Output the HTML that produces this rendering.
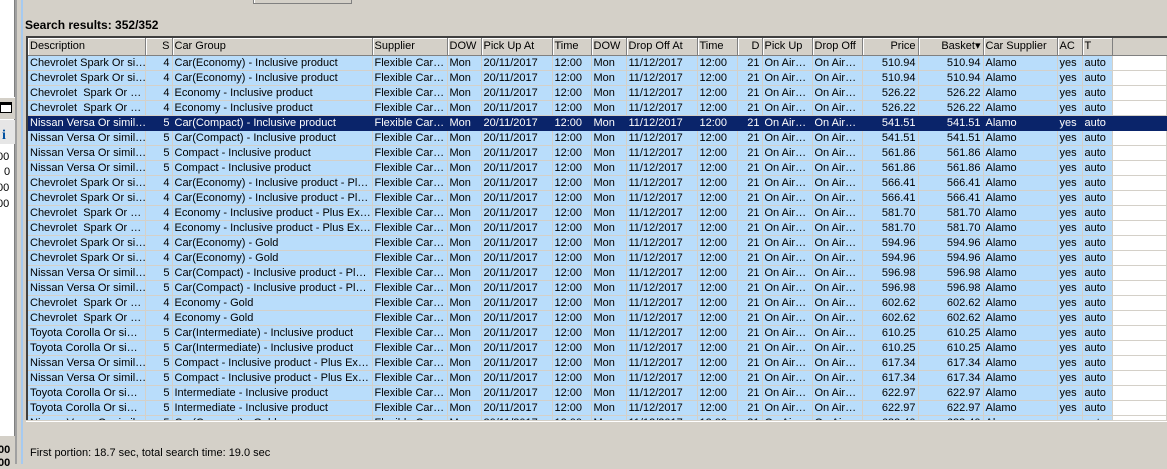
<!DOCTYPE html>
<html><head><meta charset="utf-8">
<style>
*{margin:0;padding:0;box-sizing:border-box}
body{width:1167px;height:464px;overflow:hidden;background:#d4d0c8;font-family:"Liberation Sans",Tahoma,sans-serif;font-size:11px;color:#000;position:relative}
.lp{position:absolute;left:0;top:0;width:15px;height:436px;background:#fff;border-right:1px solid #808080}
.lb{position:absolute;left:15px;top:0;width:2px;height:464px;background:#a0a0a0}
.bl{position:absolute;left:21px;top:0;width:2px;height:464px;background:#a6caf0}
.btn{position:absolute;left:253px;top:-4px;width:99px;height:8px;border:1px solid #808080;border-top:none;background:#d4d0c8;box-shadow:inset 1px 0 #fff}
.title{position:absolute;left:25px;top:18px;font-weight:bold;font-size:12px}
.frame{position:absolute;left:26px;top:36px;width:1141px;height:384px;overflow:hidden;background:#fff;border-top:2px solid #404040;border-left:2px solid #404040}
table{border-collapse:collapse;table-layout:fixed;width:1139px}
td,th{height:15px;padding:0 2px;white-space:nowrap;overflow:hidden;font-weight:normal;text-align:left;line-height:14px;border-right:1px solid #d4d0c8;border-bottom:1px solid #d4d0c8;background:#b9ddfb}
th{height:17px;line-height:16px;background:#d4d0c8;border-right:1px solid #808080;border-bottom:1px solid #808080;box-shadow:inset 1px 1px #fff}
td.e{background:#fff}
th.e{box-shadow:none;border-right:none}
.r{text-align:right}
tr.s td{background:#0a246a;color:#fff;border-color:#0a246a}
.foot{position:absolute;left:30px;top:447px}
.ico{position:absolute;left:0;top:102px;width:12px;height:11px;border:1px solid #000;border-top:3px solid #000;background:#fff}
.ii{position:absolute;left:2px;top:128px;color:#0050a0;font-weight:bold;font-family:"Liberation Serif",serif;font-size:14px}
</style></head><body>
<div class="lp"></div><div class="lb"></div><div class="bl"></div>
<div style="position:absolute;left:0;top:97px;width:15px;height:22px;background:#d4d0c8;border-top:1px solid #fff"></div>
<div class="ico"></div>
<div style="position:absolute;left:0;top:120px;width:15px;height:24px;background:#e6e6e6"></div>
<div class="ii">i</div>
<div style="position:absolute;top:151px;left:-3px">00</div>
<div style="position:absolute;left:4px;top:166px">0</div>
<div style="position:absolute;left:-3px;top:182px">00</div>
<div style="position:absolute;left:-3px;top:198px">00</div>
<div style="position:absolute;left:-2px;top:444px;font-weight:bold">00</div>
<div style="position:absolute;left:-2px;top:457px;font-weight:bold">00</div>
<div class="btn"></div>
<div class="title">Search results: 352/352</div>
<div class="frame">
<table>
<colgroup><col style="width:117px"><col style="width:27px"><col style="width:200px"><col style="width:75px"><col style="width:34px"><col style="width:71px"><col style="width:39px"><col style="width:35px"><col style="width:71px"><col style="width:40px"><col style="width:25px"><col style="width:50px"><col style="width:50px"><col style="width:56px"><col style="width:65px"><col style="width:74px"><col style="width:25px"><col style="width:30px"><col></colgroup>
<tr><th>Description</th><th class="r">S</th><th>Car Group</th><th>Supplier</th><th>DOW</th><th>Pick Up At</th><th>Time</th><th>DOW</th><th>Drop Off At</th><th>Time</th><th class="r">D</th><th>Pick Up</th><th>Drop Off</th><th class="r">Price</th><th class="r">Basket&#9662;</th><th>Car Supplier</th><th>AC</th><th>T</th><th class="e"></th></tr>
<tr><td>Chevrolet Spark Or si…</td><td class="r">4</td><td>Car(Economy) - Inclusive product</td><td>Flexible Car…</td><td>Mon</td><td>20/11/2017</td><td>12:00</td><td>Mon</td><td>11/12/2017</td><td>12:00</td><td class="r">21</td><td>On Air…</td><td>On Air…</td><td class="r">510.94</td><td class="r">510.94</td><td>Alamo</td><td>yes</td><td>auto</td><td class="e"></td></tr>
<tr><td>Chevrolet Spark Or si…</td><td class="r">4</td><td>Car(Economy) - Inclusive product</td><td>Flexible Car…</td><td>Mon</td><td>20/11/2017</td><td>12:00</td><td>Mon</td><td>11/12/2017</td><td>12:00</td><td class="r">21</td><td>On Air…</td><td>On Air…</td><td class="r">510.94</td><td class="r">510.94</td><td>Alamo</td><td>yes</td><td>auto</td><td class="e"></td></tr>
<tr><td>Chevrolet&nbsp; Spark Or …</td><td class="r">4</td><td>Economy - Inclusive product</td><td>Flexible Car…</td><td>Mon</td><td>20/11/2017</td><td>12:00</td><td>Mon</td><td>11/12/2017</td><td>12:00</td><td class="r">21</td><td>On Air…</td><td>On Air…</td><td class="r">526.22</td><td class="r">526.22</td><td>Alamo</td><td>yes</td><td>auto</td><td class="e"></td></tr>
<tr><td>Chevrolet&nbsp; Spark Or …</td><td class="r">4</td><td>Economy - Inclusive product</td><td>Flexible Car…</td><td>Mon</td><td>20/11/2017</td><td>12:00</td><td>Mon</td><td>11/12/2017</td><td>12:00</td><td class="r">21</td><td>On Air…</td><td>On Air…</td><td class="r">526.22</td><td class="r">526.22</td><td>Alamo</td><td>yes</td><td>auto</td><td class="e"></td></tr>
<tr class="s"><td>Nissan Versa Or simil…</td><td class="r">5</td><td>Car(Compact) - Inclusive product</td><td>Flexible Car…</td><td>Mon</td><td>20/11/2017</td><td>12:00</td><td>Mon</td><td>11/12/2017</td><td>12:00</td><td class="r">21</td><td>On Air…</td><td>On Air…</td><td class="r">541.51</td><td class="r">541.51</td><td>Alamo</td><td>yes</td><td>auto</td><td class="e"></td></tr>
<tr><td>Nissan Versa Or simil…</td><td class="r">5</td><td>Car(Compact) - Inclusive product</td><td>Flexible Car…</td><td>Mon</td><td>20/11/2017</td><td>12:00</td><td>Mon</td><td>11/12/2017</td><td>12:00</td><td class="r">21</td><td>On Air…</td><td>On Air…</td><td class="r">541.51</td><td class="r">541.51</td><td>Alamo</td><td>yes</td><td>auto</td><td class="e"></td></tr>
<tr><td>Nissan Versa Or simil…</td><td class="r">5</td><td>Compact - Inclusive product</td><td>Flexible Car…</td><td>Mon</td><td>20/11/2017</td><td>12:00</td><td>Mon</td><td>11/12/2017</td><td>12:00</td><td class="r">21</td><td>On Air…</td><td>On Air…</td><td class="r">561.86</td><td class="r">561.86</td><td>Alamo</td><td>yes</td><td>auto</td><td class="e"></td></tr>
<tr><td>Nissan Versa Or simil…</td><td class="r">5</td><td>Compact - Inclusive product</td><td>Flexible Car…</td><td>Mon</td><td>20/11/2017</td><td>12:00</td><td>Mon</td><td>11/12/2017</td><td>12:00</td><td class="r">21</td><td>On Air…</td><td>On Air…</td><td class="r">561.86</td><td class="r">561.86</td><td>Alamo</td><td>yes</td><td>auto</td><td class="e"></td></tr>
<tr><td>Chevrolet Spark Or si…</td><td class="r">4</td><td>Car(Economy) - Inclusive product - Pl…</td><td>Flexible Car…</td><td>Mon</td><td>20/11/2017</td><td>12:00</td><td>Mon</td><td>11/12/2017</td><td>12:00</td><td class="r">21</td><td>On Air…</td><td>On Air…</td><td class="r">566.41</td><td class="r">566.41</td><td>Alamo</td><td>yes</td><td>auto</td><td class="e"></td></tr>
<tr><td>Chevrolet Spark Or si…</td><td class="r">4</td><td>Car(Economy) - Inclusive product - Pl…</td><td>Flexible Car…</td><td>Mon</td><td>20/11/2017</td><td>12:00</td><td>Mon</td><td>11/12/2017</td><td>12:00</td><td class="r">21</td><td>On Air…</td><td>On Air…</td><td class="r">566.41</td><td class="r">566.41</td><td>Alamo</td><td>yes</td><td>auto</td><td class="e"></td></tr>
<tr><td>Chevrolet&nbsp; Spark Or …</td><td class="r">4</td><td>Economy - Inclusive product - Plus Ex…</td><td>Flexible Car…</td><td>Mon</td><td>20/11/2017</td><td>12:00</td><td>Mon</td><td>11/12/2017</td><td>12:00</td><td class="r">21</td><td>On Air…</td><td>On Air…</td><td class="r">581.70</td><td class="r">581.70</td><td>Alamo</td><td>yes</td><td>auto</td><td class="e"></td></tr>
<tr><td>Chevrolet&nbsp; Spark Or …</td><td class="r">4</td><td>Economy - Inclusive product - Plus Ex…</td><td>Flexible Car…</td><td>Mon</td><td>20/11/2017</td><td>12:00</td><td>Mon</td><td>11/12/2017</td><td>12:00</td><td class="r">21</td><td>On Air…</td><td>On Air…</td><td class="r">581.70</td><td class="r">581.70</td><td>Alamo</td><td>yes</td><td>auto</td><td class="e"></td></tr>
<tr><td>Chevrolet Spark Or si…</td><td class="r">4</td><td>Car(Economy) - Gold</td><td>Flexible Car…</td><td>Mon</td><td>20/11/2017</td><td>12:00</td><td>Mon</td><td>11/12/2017</td><td>12:00</td><td class="r">21</td><td>On Air…</td><td>On Air…</td><td class="r">594.96</td><td class="r">594.96</td><td>Alamo</td><td>yes</td><td>auto</td><td class="e"></td></tr>
<tr><td>Chevrolet Spark Or si…</td><td class="r">4</td><td>Car(Economy) - Gold</td><td>Flexible Car…</td><td>Mon</td><td>20/11/2017</td><td>12:00</td><td>Mon</td><td>11/12/2017</td><td>12:00</td><td class="r">21</td><td>On Air…</td><td>On Air…</td><td class="r">594.96</td><td class="r">594.96</td><td>Alamo</td><td>yes</td><td>auto</td><td class="e"></td></tr>
<tr><td>Nissan Versa Or simil…</td><td class="r">5</td><td>Car(Compact) - Inclusive product - Pl…</td><td>Flexible Car…</td><td>Mon</td><td>20/11/2017</td><td>12:00</td><td>Mon</td><td>11/12/2017</td><td>12:00</td><td class="r">21</td><td>On Air…</td><td>On Air…</td><td class="r">596.98</td><td class="r">596.98</td><td>Alamo</td><td>yes</td><td>auto</td><td class="e"></td></tr>
<tr><td>Nissan Versa Or simil…</td><td class="r">5</td><td>Car(Compact) - Inclusive product - Pl…</td><td>Flexible Car…</td><td>Mon</td><td>20/11/2017</td><td>12:00</td><td>Mon</td><td>11/12/2017</td><td>12:00</td><td class="r">21</td><td>On Air…</td><td>On Air…</td><td class="r">596.98</td><td class="r">596.98</td><td>Alamo</td><td>yes</td><td>auto</td><td class="e"></td></tr>
<tr><td>Chevrolet&nbsp; Spark Or …</td><td class="r">4</td><td>Economy - Gold</td><td>Flexible Car…</td><td>Mon</td><td>20/11/2017</td><td>12:00</td><td>Mon</td><td>11/12/2017</td><td>12:00</td><td class="r">21</td><td>On Air…</td><td>On Air…</td><td class="r">602.62</td><td class="r">602.62</td><td>Alamo</td><td>yes</td><td>auto</td><td class="e"></td></tr>
<tr><td>Chevrolet&nbsp; Spark Or …</td><td class="r">4</td><td>Economy - Gold</td><td>Flexible Car…</td><td>Mon</td><td>20/11/2017</td><td>12:00</td><td>Mon</td><td>11/12/2017</td><td>12:00</td><td class="r">21</td><td>On Air…</td><td>On Air…</td><td class="r">602.62</td><td class="r">602.62</td><td>Alamo</td><td>yes</td><td>auto</td><td class="e"></td></tr>
<tr><td>Toyota Corolla Or si…</td><td class="r">5</td><td>Car(Intermediate) - Inclusive product</td><td>Flexible Car…</td><td>Mon</td><td>20/11/2017</td><td>12:00</td><td>Mon</td><td>11/12/2017</td><td>12:00</td><td class="r">21</td><td>On Air…</td><td>On Air…</td><td class="r">610.25</td><td class="r">610.25</td><td>Alamo</td><td>yes</td><td>auto</td><td class="e"></td></tr>
<tr><td>Toyota Corolla Or si…</td><td class="r">5</td><td>Car(Intermediate) - Inclusive product</td><td>Flexible Car…</td><td>Mon</td><td>20/11/2017</td><td>12:00</td><td>Mon</td><td>11/12/2017</td><td>12:00</td><td class="r">21</td><td>On Air…</td><td>On Air…</td><td class="r">610.25</td><td class="r">610.25</td><td>Alamo</td><td>yes</td><td>auto</td><td class="e"></td></tr>
<tr><td>Nissan Versa Or simil…</td><td class="r">5</td><td>Compact - Inclusive product - Plus Ex…</td><td>Flexible Car…</td><td>Mon</td><td>20/11/2017</td><td>12:00</td><td>Mon</td><td>11/12/2017</td><td>12:00</td><td class="r">21</td><td>On Air…</td><td>On Air…</td><td class="r">617.34</td><td class="r">617.34</td><td>Alamo</td><td>yes</td><td>auto</td><td class="e"></td></tr>
<tr><td>Nissan Versa Or simil…</td><td class="r">5</td><td>Compact - Inclusive product - Plus Ex…</td><td>Flexible Car…</td><td>Mon</td><td>20/11/2017</td><td>12:00</td><td>Mon</td><td>11/12/2017</td><td>12:00</td><td class="r">21</td><td>On Air…</td><td>On Air…</td><td class="r">617.34</td><td class="r">617.34</td><td>Alamo</td><td>yes</td><td>auto</td><td class="e"></td></tr>
<tr><td>Toyota Corolla Or si…</td><td class="r">5</td><td>Intermediate - Inclusive product</td><td>Flexible Car…</td><td>Mon</td><td>20/11/2017</td><td>12:00</td><td>Mon</td><td>11/12/2017</td><td>12:00</td><td class="r">21</td><td>On Air…</td><td>On Air…</td><td class="r">622.97</td><td class="r">622.97</td><td>Alamo</td><td>yes</td><td>auto</td><td class="e"></td></tr>
<tr><td>Toyota Corolla Or si…</td><td class="r">5</td><td>Intermediate - Inclusive product</td><td>Flexible Car…</td><td>Mon</td><td>20/11/2017</td><td>12:00</td><td>Mon</td><td>11/12/2017</td><td>12:00</td><td class="r">21</td><td>On Air…</td><td>On Air…</td><td class="r">622.97</td><td class="r">622.97</td><td>Alamo</td><td>yes</td><td>auto</td><td class="e"></td></tr>
<tr><td>Nissan Versa Or simil…</td><td class="r">5</td><td>Car(Compact) - Gold</td><td>Flexible Car…</td><td>Mon</td><td>20/11/2017</td><td>12:00</td><td>Mon</td><td>11/12/2017</td><td>12:00</td><td class="r">21</td><td>On Air…</td><td>On Air…</td><td class="r">633.40</td><td class="r">633.40</td><td>Alamo</td><td>yes</td><td>auto</td><td class="e"></td></tr>
</table>
</div>
<div style="position:absolute;left:26px;top:420px;width:1141px;height:2px;background:#fff;border-top:1px solid #d4d0c8"></div>
<div class="foot">First portion: 18.7 sec, total search time: 19.0 sec</div>
</body></html>
